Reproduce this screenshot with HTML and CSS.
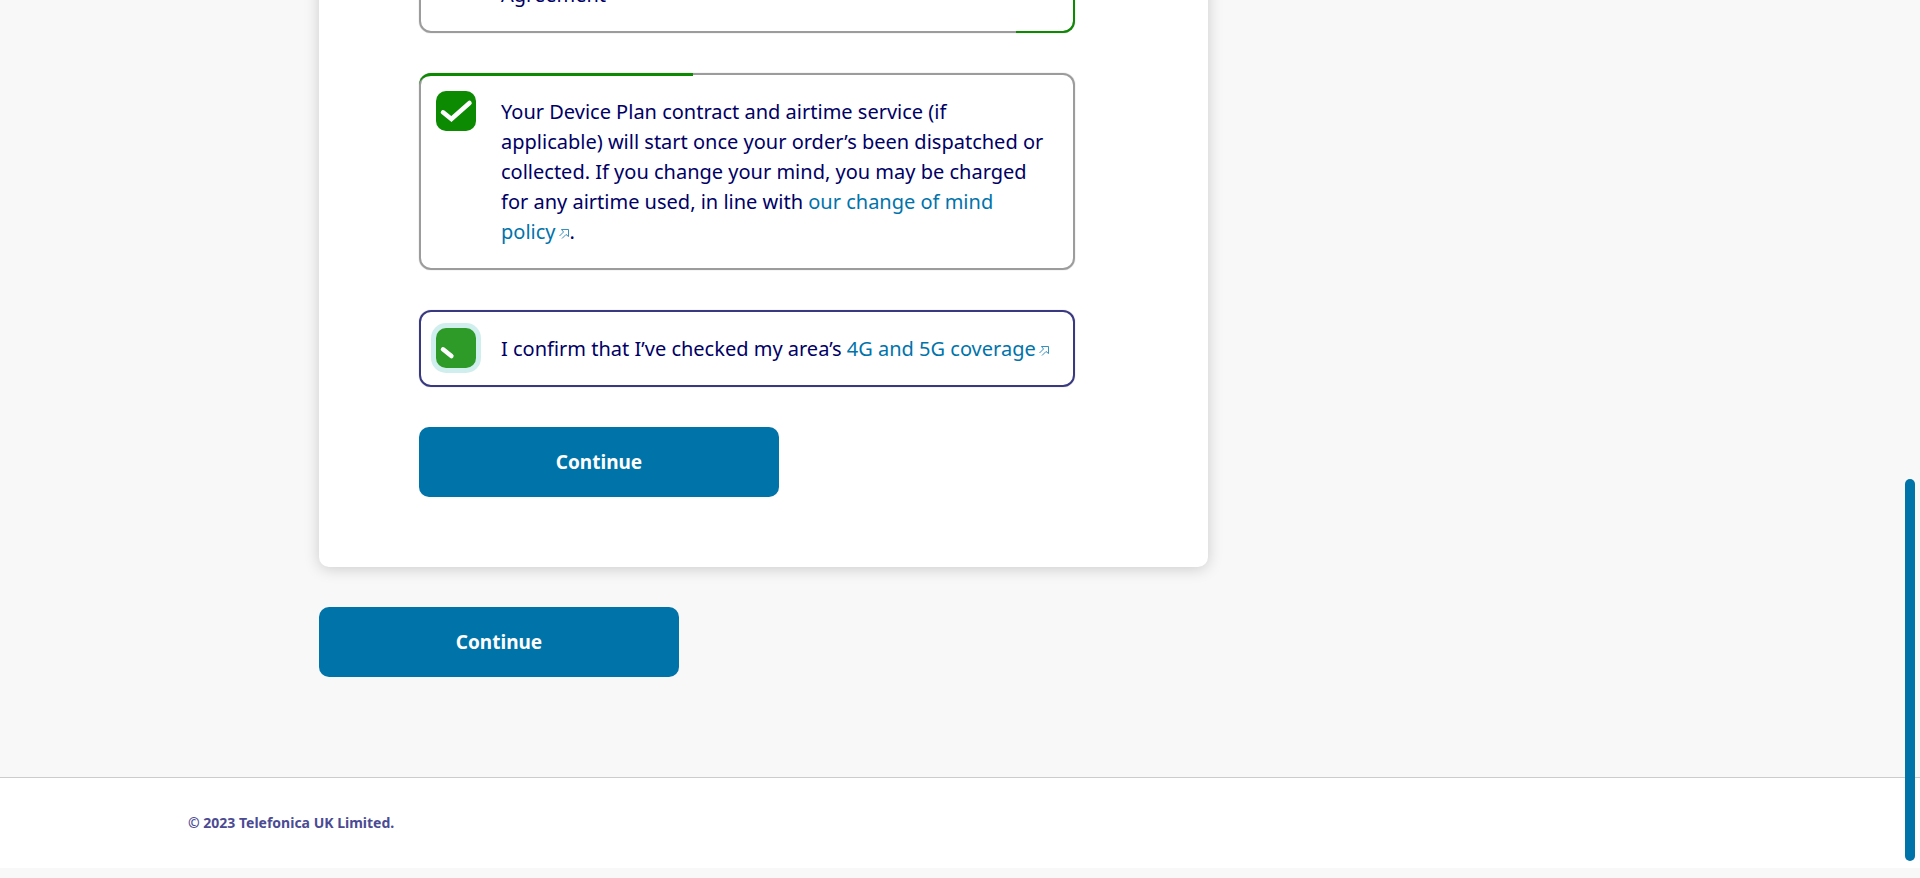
FILE: index.html
```html
<!DOCTYPE html>
<html lang="en">
<head>
<meta charset="utf-8">
<title>Agreements</title>
<link rel="stylesheet" href="styles.css">
</head>
<body>
<main class="page">
  <form class="card">
    <div class="option option-tall option-bottom-progress">
      <span class="tick">
        <input type="checkbox" id="agreement" checked>
        <svg viewBox="0 0 40 40" aria-hidden="true"><path d="M7 21.3 15.4 28 33.5 12"/></svg>
      </span>
      <label for="agreement">Agreement</label>
    </div>
    <div class="option option-top-progress">
      <span class="tick">
        <input type="checkbox" id="airtime" checked>
        <svg viewBox="0 0 40 40" aria-hidden="true"><path d="M7 21.3 15.4 28 33.5 12"/></svg>
      </span>
      <label for="airtime">Your Device Plan contract and airtime service (if applicable) will start once your order’s been dispatched or collected. If you change your mind, you may be charged for any airtime used, in line with <a href="#">our change of mind policy<svg class="external" viewBox="0 0 11 11" aria-hidden="true"><path d="M3 10.5 7 6.5l2.5 2v-7h-7L4.5 4l-4 4"/></svg></a>.</label>
    </div>
    <div class="option option-focus">
      <span class="tick">
        <input type="checkbox" id="coverage" checked>
        <svg viewBox="0 0 40 40" aria-hidden="true"><path d="M7 21.3 15.4 28"/></svg>
      </span>
      <label for="coverage">I confirm that I’ve checked my area’s <a href="#">4G and 5G coverage<svg class="external" viewBox="0 0 11 11" aria-hidden="true"><path d="M3 10.5 7 6.5l2.5 2v-7h-7L4.5 4l-4 4"/></svg></a></label>
    </div>
    <button class="button" type="button">Continue</button>
  </form>
  <button class="button" type="button">Continue</button>
</main>
<footer class="footer">
  <p>© 2023 Telefonica UK Limited.</p>
</footer>
<div class="scroll-thumb"></div>
</body>
</html>
```
FILE: styles.css
```css
* { box-sizing: border-box; }

html { overflow: hidden; background: #f8f8f8; }

body {
  margin: 0;
  color: #000066;
  font: 20px/30px "Noto Sans", "Open Sans", sans-serif;
}

a { color: #0073ab; text-decoration: none; }

.page {
  display: flex;
  flex-direction: column;
  align-items: flex-start;
  gap: 40px;
  max-width: 1544px;
  margin: -114px auto 100px;
  padding-left: 131px;
}

.card {
  display: flex;
  flex-direction: column;
  align-items: flex-start;
  gap: 40px;
  width: 100%;
  max-width: 889px;
  padding: 40px 133px 70px 100px;
  border-radius: 10px;
  background: #fff;
  box-shadow: 0 2px 15px rgba(0, 0, 0, 0.18);
}

.option {
  position: relative;
  display: flex;
  align-items: flex-start;
  gap: 25px;
  width: 100%;
  padding: 16px 15px;
  border: 2px solid #9c9c9c;
  border-radius: 12px;
  box-shadow: 0 0 1px #9c9c9c;
}

.option label { flex: 1; padding: 6px 6px 5px 0; }

.option-tall { min-height: 107px; }
.option-tall label { align-self: flex-end; }

.option-focus { border-color: #393982; }

.option-top-progress::before,
.option-bottom-progress::before {
  content: "";
  position: absolute;
  border: 0 solid #0b8a02;
}

.option-top-progress::before {
  top: -2px;
  left: -2px;
  width: 42%;
  height: 12px;
  border-top-width: 3px;
  border-top-left-radius: 12px;
}

.option-bottom-progress::before {
  top: -2px;
  right: -2px;
  bottom: -2px;
  width: 57px;
  border-right-width: 2px;
  border-bottom-width: 2px;
  border-bottom-right-radius: 12px;
}

.tick { position: relative; width: 40px; height: 40px; }

.tick input {
  display: block;
  appearance: none;
  width: 40px;
  height: 40px;
  margin: 0;
  border-radius: 10px;
  background: #0b8a02;
}

.option-focus input { background: #2e9b28; box-shadow: 0 0 0 5px #d1eeee; }

.tick svg {
  position: absolute;
  inset: 0;
  fill: none;
  stroke: #fff;
  stroke-width: 4.5;
  stroke-linecap: round;
  pointer-events: none;
}

.external {
  width: 11px;
  height: 11px;
  margin-left: 3px;
  fill: none;
  stroke: currentColor;
  stroke-width: 0.8;
}

.button {
  width: 360px;
  max-width: 100%;
  height: 70px;
  border: 0;
  border-radius: 10px;
  background: #0073a9;
  color: #fff;
  font: bold 19px/30px "Noto Sans", "Open Sans", sans-serif;
}

.footer {
  border-top: 1px solid #ccc;
  background: #fff;
}

.footer p {
  max-width: 1544px;
  margin: 0 auto;
  padding: 35px 0;
  color: #4b4b93;
  font-size: 14px;
  font-weight: 700;
  line-height: 20px;
}

.scroll-thumb {
  position: fixed;
  top: 479px;
  right: 5px;
  bottom: 17px;
  width: 10px;
  border-radius: 5px;
  background: #0073a9;
}
```
